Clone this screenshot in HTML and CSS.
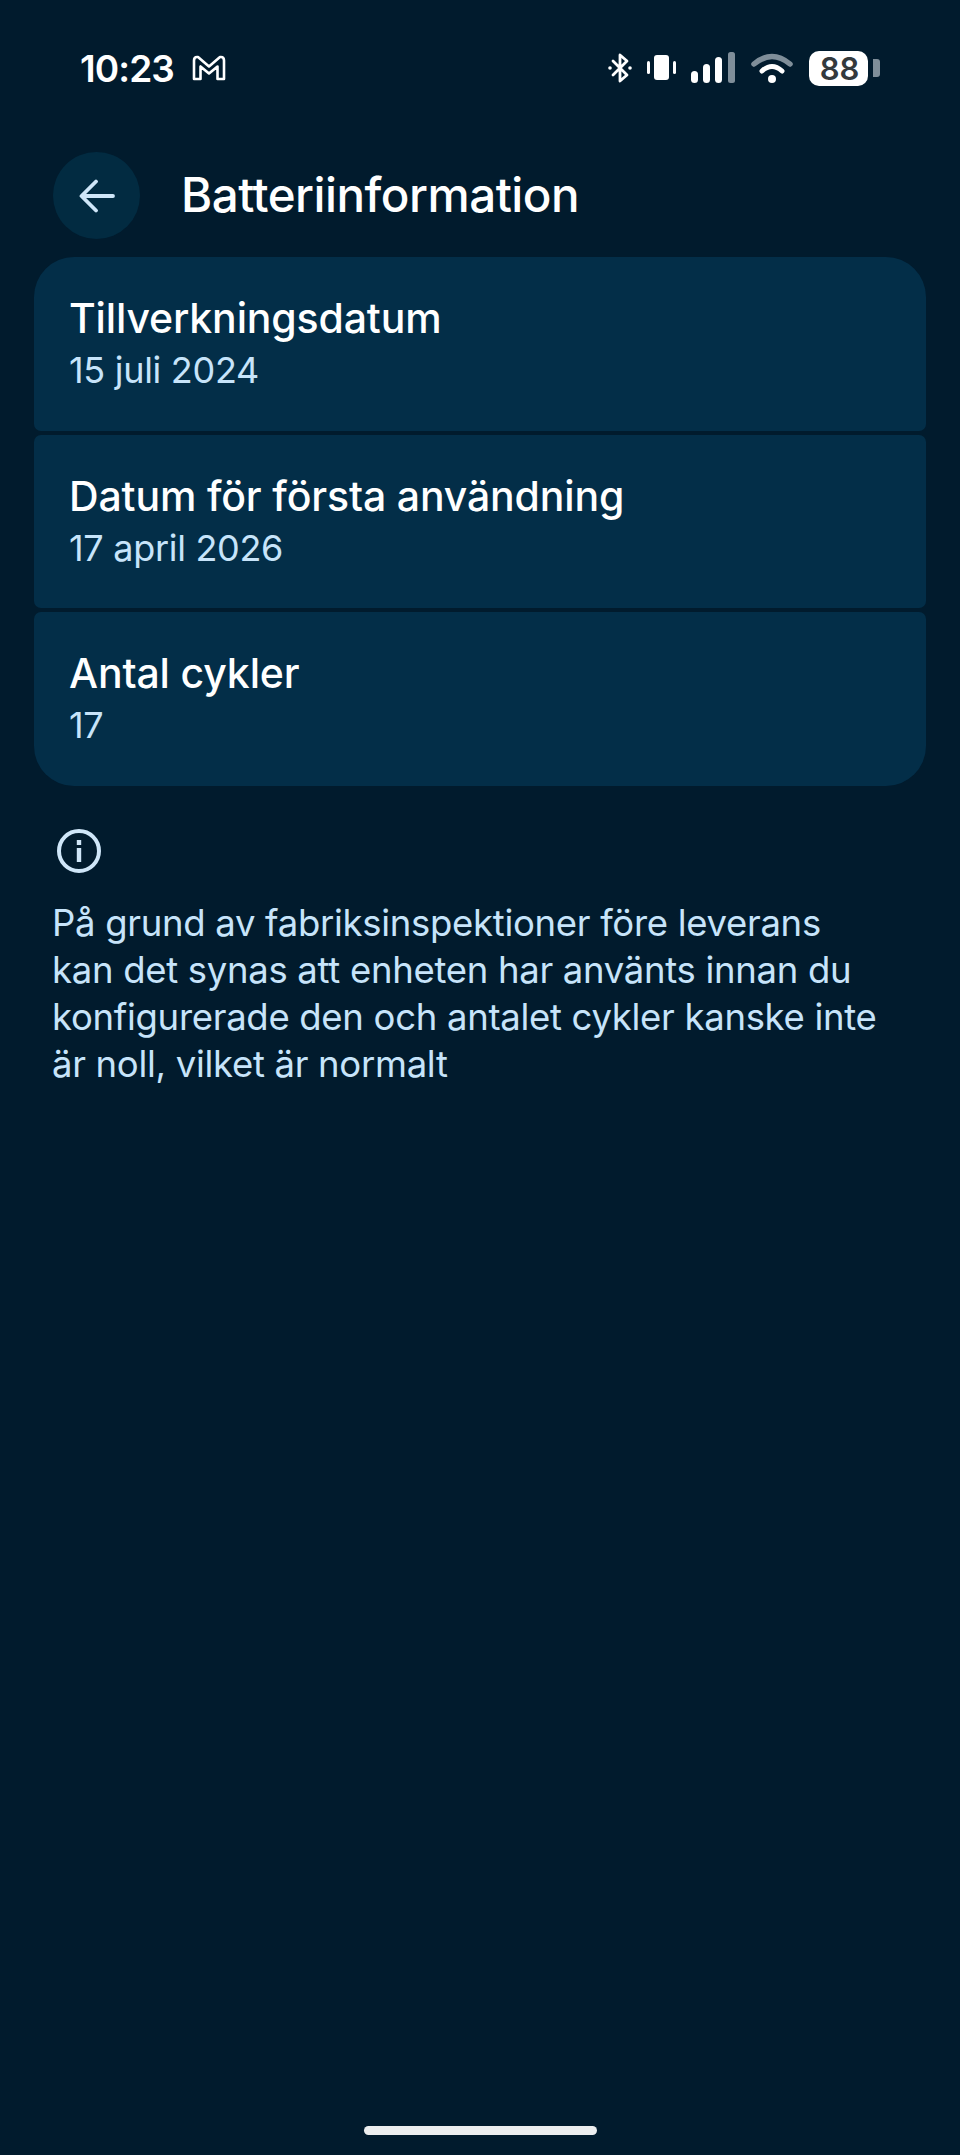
FILE: index.html
```html
<!DOCTYPE html>
<html lang="sv">
<head>
<meta charset="utf-8">
<title>Batteriinformation</title>
<link rel="stylesheet" href="styles.css">
</head>
<body>
<div class="screen">
  <div class="status">
    <div class="status-left">
      <span class="time">10:23</span>
      <svg class="gmail" viewBox="0 0 34 26" width="34" height="26"><path d="M2 24V5.500Q2 2 5 2h1l11 9.500L28 2h1q3 0 3 3.500V24h-6.500V11.500L17 18.500 8.500 11.500V24Z" fill="none" stroke="#fff" stroke-width="2.600" stroke-linejoin="round"/></svg>
    </div>
    <div class="status-right">
      <svg class="bt" viewBox="0 0 26 30" width="26" height="30"><path d="M6 8l14 14-7 6V2l7 6L6 22" fill="none" stroke="#fff" stroke-width="2.800" stroke-linejoin="round" stroke-linecap="round"/><circle cx="3" cy="15" r="1.800" fill="#fff"/><circle cx="23" cy="15" r="1.800" fill="#fff"/></svg>
      <svg class="vib" viewBox="0 0 29 26" width="29" height="26"><rect x="7" y="0" width="15" height="25" rx="3" fill="#fff"/><rect x="0" y="6" width="3" height="13" rx="1.500" fill="#fff"/><rect x="26" y="6" width="3" height="13" rx="1.500" fill="#fff"/></svg>
      <svg class="sig" viewBox="0 0 44 32" width="44" height="32"><rect x="0" y="19" width="7" height="12" rx="3.500" fill="#fff"/><rect x="12" y="12" width="7" height="19" rx="3.500" fill="#fff"/><rect x="24" y="5" width="7" height="26" rx="3.500" fill="#fff"/><rect x="37" y="0" width="7" height="31" rx="2.500" fill="#7f8e99"/></svg>
      <svg class="wifi" viewBox="0 0 42 32" width="42" height="32"><path d="M3 12Q21-3 39 12" fill="none" stroke="#7f8e99" stroke-width="5.500" stroke-linecap="round"/><path d="M11 19Q21 10 31 19" fill="none" stroke="#fff" stroke-width="5" stroke-linecap="round"/><circle cx="21" cy="27" r="4" fill="#fff"/></svg>
      <div class="battery"><span class="batt-body">88</span><span class="batt-cap"></span></div>
    </div>
  </div>

  <header class="appbar">
    <button class="back" aria-label="Tillbaka">
      <svg viewBox="0 0 36 34" width="36" height="34"><path d="M34 17H3M17 2.500 2.500 17 17 31.500" fill="none" stroke="#cfe6f8" stroke-width="3.800" stroke-linecap="round" stroke-linejoin="round"/></svg>
    </button>
    <h1 class="title">Batteriinformation</h1>
  </header>

  <section class="cards">
    <div class="card card-first">
      <div class="card-title">Tillverkningsdatum</div>
      <div class="card-value">15 juli 2024</div>
    </div>
    <div class="card">
      <div class="card-title">Datum för första användning</div>
      <div class="card-value">17 april 2026</div>
    </div>
    <div class="card card-last">
      <div class="card-title">Antal cykler</div>
      <div class="card-value">17</div>
    </div>
  </section>

  <section class="note">
    <svg class="info" viewBox="0 0 44 44" width="44" height="44"><circle cx="22" cy="22" r="20" fill="none" stroke="#cfe6f8" stroke-width="4"/><rect x="19.800" y="19" width="4.400" height="14" fill="#cfe6f8"/><rect x="19.800" y="11" width="4.400" height="5" fill="#cfe6f8"/></svg>
    <p class="note-text">På grund av fabriksinspektioner före leverans<br>kan det synas att enheten har använts innan du<br>konfigurerade den och antalet cykler kanske inte<br>är noll, vilket är normalt</p>
  </section>

  <div class="home-wrap"><div class="home"></div></div>
</div>
</body>
</html>
```
FILE: styles.css
```css
* { box-sizing: border-box; }
html, body { margin: 0; padding: 0; }
body { background: #011b2d; font-family: Inter, "Noto Sans", sans-serif; }
.screen { width: 960px; height: 2155px; display: flex; flex-direction: column; background: #011b2d; color: #fff; }

.status { height: 133px; padding: 46px 80px 0 80px; display: flex; justify-content: space-between; align-items: flex-start; }
.status-left { display: flex; align-items: center; gap: 18px; height: 44px; }
.time { font-size: 37px; font-weight: 600; letter-spacing: -0.9px; }
.status-right { display: flex; align-items: center; height: 44px; }
.bt { margin-right: 14px; }
.vib { margin-right: 15px; }
.sig { margin-right: 16px; }
.wifi { margin-right: 16px; }
.battery { display: flex; align-items: center; gap: 5px; }
.batt-body { width: 59px; height: 35px; padding-left: 2px; border-radius: 10px; background: #fff; color: #33393d; font-size: 31px; font-weight: 600; letter-spacing: 0; display: flex; align-items: center; justify-content: center; }
.batt-cap { width: 7px; height: 18px; border-radius: 0 3px 3px 0; background: #7f8e99; }

.appbar { height: 124px; padding: 0 0 0 53px; display: flex; align-items: flex-start; }
.back { width: 87px; height: 87px; border: 0; padding: 0; border-radius: 50%; background: #022b41; display: flex; align-items: center; justify-content: center; margin-top: 19px; flex: none; }
.title { margin: 19px 0 0 41px; height: 87px; line-height: 85px; font-size: 47.500px; font-weight: 500; letter-spacing: -0.5px; color: #fff; }

.cards { margin: 0 34px; display: flex; flex-direction: column; gap: 4px; }
.card { height: 173.500px; background: #032e48; border-radius: 7px; padding: 36px 35px 0; }
.card-first { border-radius: 40px 40px 7px 7px; }
.card-last { border-radius: 7px 7px 40px 40px; }
.card-title { font-size: 41px; line-height: 50px; font-weight: 500; letter-spacing: -0.15px; color: #fff; }
.card-value { font-size: 36px; line-height: 44px; font-weight: 400; letter-spacing: -0.3px; color: #c7e4fa; margin-top: 5px; }

.note { padding: 43px 52px 0; }
.info { display: block; margin-left: 5px; }
.note-text { margin: 27px 0 0; font-size: 36.500px; line-height: 47px; letter-spacing: -0.3px; color: #c7e4fa; white-space: nowrap; }

.home-wrap { margin-top: auto; height: 29px; display: flex; justify-content: center; }
.home { width: 233px; height: 9px; border-radius: 5px; background: #eceeef; }
```
